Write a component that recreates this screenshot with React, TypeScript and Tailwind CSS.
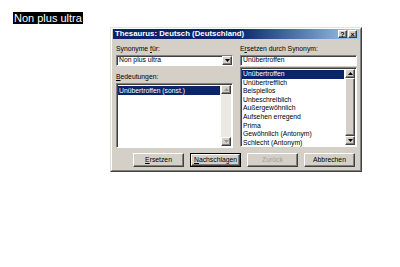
import React from 'react';

const raised =
  'bg-[#d4d0c8] border border-t-white border-l-white border-r-[#404040] border-b-[#404040] shadow-[inset_-1px_-1px_0_#808080]';
const sunken =
  'bg-white border border-t-[#808080] border-l-[#808080] border-r-white border-b-white shadow-[inset_1px_1px_0_#404040]';

function Arrow({ up = false, disabled = false }: { up?: boolean; disabled?: boolean }) {
  const fill = disabled ? '#9a9892' : '#000';
  return (
    <svg width="5" height="3" viewBox="0 0 5 3">
      <polygon points={up ? '2.5,0 5,3 0,3' : '0,0 5,0 2.5,3'} fill={fill} />
    </svg>
  );
}

function ScrollBar({ disabled = false }: { disabled?: boolean }) {
  return (
    <div className="w-[10px] h-full flex flex-col bg-[#ebe9e4]">
      <div className={`${raised} h-[9px] flex items-center justify-center`}>
        <Arrow up disabled={disabled} />
      </div>
      <div className="flex-1 flex flex-col">
        {!disabled && <div className={`${raised} flex-1`} />}
      </div>
      <div className={`${raised} h-[9px] flex items-center justify-center`}>
        <Arrow disabled={disabled} />
      </div>
    </div>
  );
}

function Button({ children, isDefault = false, disabled = false }: { children: React.ReactNode; isDefault?: boolean; disabled?: boolean }) {
  return (
    <div className={`w-[51px] h-[14px] ${isDefault ? 'border border-black' : ''}`}>
      <div
        className={`${raised} w-full h-full flex items-center justify-center text-[6.8px] leading-none whitespace-nowrap ${
          disabled ? 'text-[#a09e98]' : 'text-black'
        }`}
      >
        {children}
      </div>
    </div>
  );
}

const synonyms = [
  'Unübertroffen',
  'Unübertrefflich',
  'Beispiellos',
  'Unbeschreiblich',
  'Außergewöhnlich',
  'Aufsehen erregend',
  'Prima',
  'Gewöhnlich (Antonym)',
  'Schlecht (Antonym)',
];

export default function App() {
  return (
    <div className="w-[400px] h-[267px] bg-white pt-[12px] pl-[13px] font-['Liberation_Sans',Arial,sans-serif]">
      <div className="h-[13px] text-[11px] leading-[13px]">
        <span className="bg-black text-white px-[1px]">Non plus ultra</span>
      </div>

      <div className="ml-[97px] mt-[2px] w-[252px] h-[145px] border border-t-[#e4e2dc] border-l-[#e4e2dc] border-r-[#404040] border-b-[#404040]">
        <div className="w-full h-full bg-[#d4d0c8] border border-t-white border-l-white border-r-[#808080] border-b-[#808080] flex flex-col">
          {/* title bar */}
          <div className="h-[10px] mx-[1px] bg-gradient-to-r from-[#0a246a] via-[#0a246a] to-[#a6caf0] flex items-center pl-[2px] pr-[2px]">
            <span className="text-white font-bold text-[7.8px] leading-none flex-1">Thesaurus: Deutsch (Deutschland)</span>
            <div className={`${raised} w-[9px] h-[8px] flex items-center justify-center text-[7px] font-bold leading-none`}>?</div>
            <div className={`${raised} w-[9px] h-[8px] ml-[1px] flex items-center justify-center text-[7px] font-bold leading-none`}>×</div>
          </div>

          {/* body */}
          <div className="flex gap-[7px] pl-[4px] pt-[5px] text-[6.8px] text-black">
            <div className="w-[117px] flex flex-col">
              <div className="h-[9px] leading-[9px]">
                Synonyme <u>f</u>ür:
              </div>
              <div className={`${sunken} h-[11px] mt-[2px] flex items-center`}>
                <span className="flex-1 pl-[2px] leading-none">Non plus ultra</span>
                <div className={`${raised} w-[10px] h-[9px] flex items-center justify-center`}>
                  <Arrow />
                </div>
              </div>
              <div className="h-[9px] leading-[9px] mt-[6px]">
                <u>B</u>edeutungen:
              </div>
              <div className={`${sunken} h-[65px] mt-[2px] flex p-[1px]`}>
                <div className="flex-1 pt-[1px] pr-[1px]">
                  <div className="h-[9px] leading-[9px] pl-[1px] bg-[#0a246a] text-white">Unübertroffen (sonst.)</div>
                </div>
                <ScrollBar disabled />
              </div>
            </div>

            <div className="w-[117px] flex flex-col">
              <div className="h-[9px] leading-[9px]">
                E<u>r</u>setzen durch Synonym:
              </div>
              <div className={`${sunken} h-[11px] mt-[2px] flex items-center`}>
                <span className="flex-1 pl-[2px] leading-none">Unübertroffen</span>
              </div>
              <div className={`${sunken} h-[80px] mt-[1px] flex p-[1px]`}>
                <div className="flex-1 pt-[1px] pr-[1px]">
                  {synonyms.map((s, i) => (
                    <div
                      key={s}
                      className={`h-[8.6px] leading-[8.6px] pl-[1px] ${i === 0 ? 'bg-[#0a246a] text-white' : ''}`}
                    >
                      {s}
                    </div>
                  ))}
                </div>
                <ScrollBar />
              </div>
            </div>
          </div>

          {/* buttons */}
          <div className="flex justify-end gap-[6px] pr-[5px] mt-[5px]">
            <Button>
              <u>E</u>rsetzen
            </Button>
            <Button isDefault>
              <u>N</u>achschlagen
            </Button>
            <Button disabled>Zurück</Button>
            <Button>Abbrechen</Button>
          </div>
        </div>
      </div>
    </div>
  );
}
